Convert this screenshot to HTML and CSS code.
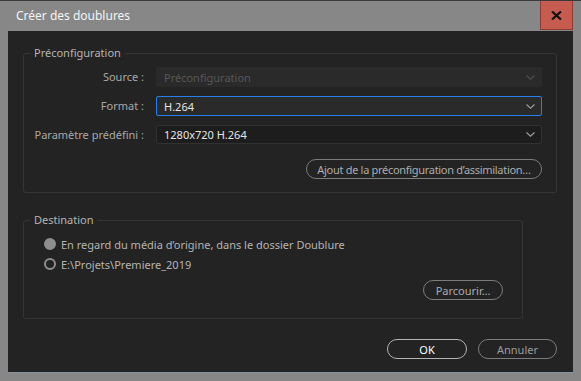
FILE: index.html
```html
<!DOCTYPE html>
<html>
<head>
    <title>Créer des doublures</title>
    <link rel="stylesheet" href="styles.css">
</head>
<body>
    <div class="window">
        <div class="titlebar">
            <span class="title">Créer des doublures</span>
            <button class="close" type="button">
                <svg width="11" height="9" viewBox="0 0 11 9"><path d="M1 0.5 L10 8.5 M10 0.5 L1 8.5" stroke="#111" stroke-width="2.2"/></svg>
            </button>
        </div>
        <div class="client">
            <fieldset class="group group-preset">
                <legend>Préconfiguration</legend>
                <div class="rows">
                    <label class="row-label">Source :</label>
                    <div class="select disabled">
                        <span>Préconfiguration</span>
                        <svg class="chevron" width="9" height="5" viewBox="0 0 9 5"><path d="M0.5 0.5 L4.5 4.2 L8.5 0.5" fill="none" stroke="currentColor" stroke-width="1.2"/></svg>
                    </div>
                    <label class="row-label">Format :</label>
                    <div class="select focused">
                        <span>H.264</span>
                        <svg class="chevron" width="9" height="5" viewBox="0 0 9 5"><path d="M0.5 0.5 L4.5 4.2 L8.5 0.5" fill="none" stroke="currentColor" stroke-width="1.2"/></svg>
                    </div>
                    <label class="row-label">Paramètre prédéfini :</label>
                    <div class="select dark">
                        <span>1280x720 H.264</span>
                        <svg class="chevron" width="9" height="5" viewBox="0 0 9 5"><path d="M0.5 0.5 L4.5 4.2 L8.5 0.5" fill="none" stroke="currentColor" stroke-width="1.2"/></svg>
                    </div>
                </div>
                <div class="actions">
                    <button class="pill wide" type="button">Ajout de la préconfiguration d’assimilation…</button>
                </div>
            </fieldset>

            <fieldset class="group group-dest">
                <legend>Destination</legend>
                <div class="radio-row">
                    <span class="radio checked"></span>
                    <span>En regard du média d’origine, dans le dossier Doublure</span>
                </div>
                <div class="radio-row">
                    <span class="radio"></span>
                    <span>E:\Projets\Premiere_2019</span>
                </div>
                <div class="actions browse">
                    <button class="pill browse-btn" type="button">Parcourir…</button>
                </div>
            </fieldset>

            <div class="footer">
                <button class="pill primary" type="button">OK</button>
                <button class="pill secondary" type="button">Annuler</button>
            </div>
        </div>
    </div>
</body>
</html>
```

FILE: styles.css
```css
html, body {
    margin: 0;
    height: 100%;
}

body {
    font-family: "Noto Sans", "DejaVu Sans", sans-serif;
    font-size: 11px;
    background-color: #878787;
}

.window {
    display: flex;
    flex-direction: column;
    width: 581px;
    height: 381px;
    box-sizing: border-box;
    border-top: 1px solid #3a3a3a;
}

.titlebar {
    display: flex;
    align-items: stretch;
    height: 30px;
    padding-right: 8px;
}

.title {
    flex: 1;
    padding-left: 16px;
    line-height: 30px;
    font-size: 12px;
    color: #f4f4f4;
}

.close {
    width: 33px;
    padding: 0;
    margin: 0 0 1px 0;
    border: 1px solid #8e3b33;
    border-top: none;
    background-color: #c65b50;
    display: flex;
    align-items: center;
    justify-content: center;
}

.client {
    flex: 1;
    margin: 0 8px 8px 8px;
    padding: 15px 16px 0 15px;
    background-color: #232323;
    border-bottom: 1px solid #8a94a0;
    display: flex;
    flex-direction: column;
}

.group {
    margin: 0;
    padding: 0;
    border: 1px solid #353535;
    border-radius: 3px;
    min-width: 0;
}

.group legend {
    margin-left: 6px;
    padding: 0 4px;
    line-height: 14px;
    font-size: 11px;
    color: #b4b4b4;
}

.group-preset {
    padding: 7px 14px 13px 0;
}

.rows {
    display: grid;
    grid-template-columns: 120px 1fr;
    column-gap: 12px;
    row-gap: 9px;
}

.row-label {
    text-align: right;
    line-height: 20px;
    color: #a8a8a8;
}

.select {
    height: 20px;
    box-sizing: border-box;
    display: flex;
    align-items: center;
    justify-content: space-between;
    padding: 0 6px 0 7px;
    border-radius: 2px;
    color: #e4e4e4;
    background-color: #2a2a2a;
    border: 1px solid #2a2a2a;
}

.select.disabled {
    color: #575757;
}

.select.focused {
    border-color: #2680eb;
}

.select.dark {
    height: 19px;
    background-color: #1d1d1d;
    border-color: #313131;
}

.chevron {
    color: #9a9a9a;
}

.select.disabled .chevron {
    color: #4e4e4e;
}

.actions {
    display: flex;
    justify-content: flex-end;
    margin-top: 14px;
}

.pill {
    height: 20px;
    box-sizing: border-box;
    padding: 0 10px;
    border-radius: 10px;
    border: 1px solid #7c7c7c;
    background: transparent;
    font-family: inherit;
    font-size: 11px;
    line-height: 17px;
    color: #acacac;
    white-space: nowrap;
    cursor: pointer;
}

.pill.wide {
    width: 236px;
    padding: 0 6px;
    letter-spacing: -0.3px;
}

.group-dest {
    width: 500px;
    box-sizing: border-box;
    margin-top: 20px;
    padding: 7px 19px 18px 20px;
}

.group-dest legend {
    margin-left: -14px;
}

.radio-row {
    display: flex;
    align-items: center;
    gap: 5px;
    height: 20px;
    color: #b4b4b4;
}

.radio {
    width: 12px;
    height: 12px;
    box-sizing: border-box;
    border-radius: 50%;
    border: 2px solid #8e8e8e;
}

.radio.checked {
    background-color: #8e8e8e;
}

.actions.browse {
    margin-top: 6px;
}

.browse-btn {
    width: 80px;
}

.footer {
    display: flex;
    justify-content: flex-end;
    gap: 11px;
    margin-top: 20px;
}

.pill.primary {
    width: 80px;
    border-color: #b4b4b4;
    color: #ffffff;
}

.pill.secondary {
    width: 79px;
    color: #9c9c9c;
}
```
